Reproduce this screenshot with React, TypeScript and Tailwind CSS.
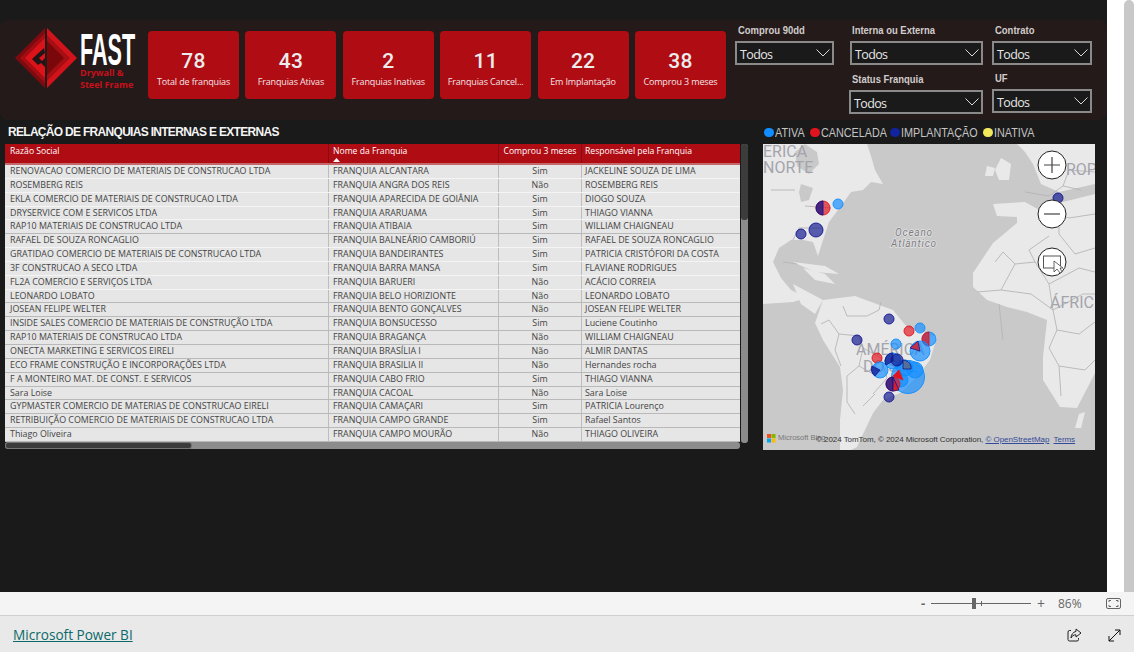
import React from "react";

const rows = [
["RENOVACAO COMERCIO DE MATERIAIS DE CONSTRUCAO LTDA","FRANQUIA ALCANTARA","Sim","JACKELINE SOUZA DE LIMA"],
["ROSEMBERG REIS","FRANQUIA ANGRA DOS REIS","Não","ROSEMBERG REIS"],
["EKLA COMERCIO DE MATERIAIS DE CONSTRUCAO LTDA","FRANQUIA APARECIDA DE GOIÂNIA","Sim","DIOGO SOUZA"],
["DRYSERVICE COM E SERVICOS LTDA","FRANQUIA ARARUAMA","Sim","THIAGO VIANNA"],
["RAP10 MATERIAIS DE CONSTRUCAO LTDA","FRANQUIA ATIBAIA","Sim","WILLIAM CHAIGNEAU"],
["RAFAEL DE SOUZA RONCAGLIO","FRANQUIA BALNEÁRIO CAMBORIÚ","Sim","RAFAEL DE SOUZA RONCAGLIO"],
["GRATIDAO COMERCIO DE MATERIAIS DE CONSTRUCAO LTDA","FRANQUIA BANDEIRANTES","Sim","PATRICIA CRISTÓFORI DA COSTA"],
["3F CONSTRUCAO A SECO LTDA","FRANQUIA BARRA MANSA","Sim","FLAVIANE RODRIGUES"],
["FL2A COMERCIO E SERVIÇOS LTDA","FRANQUIA BARUERI","Não","ACÁCIO CORREIA"],
["LEONARDO LOBATO","FRANQUIA BELO HORIZIONTE","Não","LEONARDO LOBATO"],
["JOSEAN FELIPE WELTER","FRANQUIA BENTO GONÇALVES","Não","JOSEAN FELIPE WELTER"],
["INSIDE SALES COMERCIO DE MATERIAIS DE CONSTRUÇÃO LTDA","FRANQUIA BONSUCESSO","Sim","Luciene Coutinho"],
["RAP10 MATERIAIS DE CONSTRUCAO LTDA","FRANQUIA BRAGANÇA","Não","WILLIAM CHAIGNEAU"],
["ONECTA MARKETING E SERVICOS EIRELI","FRANQUIA BRASÍLIA I","Não","ALMIR DANTAS"],
["ECO FRAME CONSTRUÇÃO E INCORPORAÇÕES LTDA","FRANQUIA BRASILIA II","Não","Hernandes rocha"],
["F A MONTEIRO MAT. DE CONST. E SERVICOS","FRANQUIA CABO FRIO","Sim","THIAGO VIANNA"],
["Sara Loise","FRANQUIA CACOAL","Não","Sara Loise"],
["GYPMASTER COMERCIO DE MATERIAS DE CONSTRUCAO EIRELI","FRANQUIA CAMAÇARI","Sim","PATRICIA Lourenço"],
["RETRIBUIÇÃO COMERCIO DE MATERIAIS DE CONSTRUCAO LTDA","FRANQUIA CAMPO GRANDE","Sim","Rafael Santos"],
["Thiago Oliveira","FRANQUIA CAMPO MOURÃO","Não","THIAGO OLIVEIRA"],
];

const cards = [
  ["78","Total de franquias"],
  ["43","Franquias Ativas"],
  ["2","Franquias Inativas"],
  ["11","Franquias Cancel..."],
  ["22","Em Implantação"],
  ["38","Comprou 3 meses"],
];

function Slicer({ label, className, labelClass }: { label: string; className: string; labelClass: string }) {
  return (
    <div className={className}>
      <div className={`h-[17px] whitespace-nowrap text-[11px] leading-[13px] font-bold text-[#d0cccc] [font-family:'Liberation_Sans',sans-serif] ${labelClass}`}>
        <span className="inline-block origin-left scale-x-[0.86]">{label}</span>
      </div>
      <div className="flex h-[24px] items-center justify-between border-2 border-[#8a8a8a] bg-[#1a1a1a] pl-[3px] pr-[1px]">
        <span className="mt-[4px] text-[12.5px] text-[#e6e6e6] tracking-[-0.6px]">Todos</span>
        <svg className="mr-[1px]" width="14" height="8" viewBox="0 0 14 8" fill="none"><path d="M0.5 0.5 L7 7 L13.5 0.5" stroke="#d8d8d8" strokeWidth="1" /></svg>
      </div>
    </div>
  );
}

function Logo() {
  return (
    <div className="flex h-full w-[148px] shrink-0 items-start pl-[15px] pt-[8px]">
      <svg width="62" height="62" viewBox="0 0 62 62" className="shrink-0">
        <polygon points="30,0 30,60 0,30" fill="#7d0a0f" />
        <polygon points="30,5 30,55 5,30" fill="#a30d13" />
        <polygon points="30,10 30,50 10,30" fill="#dc1318" />
        <polygon points="32,0 62,30 32,60" fill="#d2141a" />
        <polygon points="32,7 55,30 32,53" fill="#a50f14" />
        <polygon points="32,13 49,30 32,47" fill="#7a0709" />
        <polygon points="17,31 29,20 30,25 24,30 27,33 30,30 30,39 26,35 23,37" fill="#221517" />
      </svg>
      <div className="ml-[3px] mt-[5px] flex w-[54px] flex-col">
        <div className="h-[34px] overflow-visible whitespace-nowrap text-[44px] leading-[33px] font-bold text-white [font-family:'Liberation_Sans',sans-serif]">
          <span className="inline-block origin-left scale-x-[0.49]">FAST</span>
        </div>
        <span className="text-[9px] leading-[12px] font-bold text-[#c8101a] whitespace-nowrap">Drywall &amp;</span>
        <span className="text-[9px] leading-[12px] font-bold text-[#c8101a] whitespace-nowrap">Steel Frame</span>
      </div>
    </div>
  );
}

const BLUE = "#118dff";
const RED = "#e0141e";
const NAVY = "#12178e";

function Pie({ x, y, r, a, b }: { x: number; y: number; r: number; a: string; b: string }) {
  return (
    <g strokeWidth="0.9">
      <circle cx={x} cy={y} r={r} fill={b} fillOpacity="0.7" stroke={b} />
      <path d={`M${x} ${y - r} A${r} ${r} 0 0 0 ${x} ${y + r} Z`} fill={a} fillOpacity="0.75" stroke={a} />
    </g>
  );
}

function Dot({ x, y, r, c }: { x: number; y: number; r: number; c: string }) {
  return <circle cx={x} cy={y} r={r} fill={c} fillOpacity="0.68" stroke={c} strokeWidth="0.9" />;
}

const mapLabel = { fontFamily: "Roboto, sans-serif", fontSize: 16, fill: "#a4a4ac" };
const oceanLabel = { fontFamily: "Roboto, sans-serif", fontSize: 10, fill: "#7c7c82", fontStyle: "italic", letterSpacing: 0.8, stroke: "#e4e4e4", strokeWidth: 1.4, paintOrder: "stroke" } as React.CSSProperties;

function MapCanvas() {
  return (
    <div className="relative h-[306px] w-[332px] overflow-hidden bg-[#c9c9c9]">
      <svg viewBox="0 0 332 306" width="332" height="306" className="absolute inset-0">
        {/* North America */}
        <path fill="#e9e9e9" d="M0 0 L104 0 L108 12 L112 26 L120 40 L108 38 L100 46 L88 48 L78 62 L66 78 L60 96 L55 112 L50 98 L40 96 L28 96 L16 104 L10 118 L18 134 L28 146 L44 154 L30 158 L0 160 Z" />
        <path fill="#c9c9c9" d="M42 0 L54 8 L56 20 L46 30 L34 22 L32 8 Z" />
        <path fill="#c9c9c9" d="M38 40 L50 44 L46 56 L38 58 L36 48 Z" />
        <path fill="#e9e9e9" d="M30 118 L62 122 L76 130 L52 128 Z" />
        {/* Europe & Africa */}
        <path fill="#e9e9e9" d="M230 60 L262 58 L280 68 L300 58 L332 50 L332 229 L314 264 L297 263 L280 236 L280 213 L284 176 L264 168 L244 163 L224 156 L210 143 L210 129 L230 99 L254 79 L254 73 L234 72 Z" />
        <path fill="#e9e9e9" d="M254 0 L332 0 L332 40 L296 48 L278 40 L270 20 L262 8 Z" />
        <path fill="#e9e9e9" d="M238 14 L248 20 L246 36 L236 36 L232 26 Z" />
        <path fill="#e9e9e9" d="M224 22 L232 24 L230 32 L222 32 Z" />
        <path fill="#e9e9e9" d="M316 270 L322 268 L318 284 L312 284 Z" />
        {/* South America */}
        <path fill="#e9e9e9" d="M60 156 L92 152 L130 166 L144 183 L174 193 L167 216 L154 233 L137 249 L120 256 L110 269 L94 303 L88 306 L77 306 L77 276 L80 246 L77 223 L60 196 L52 179 Z" />
        <path fill="#e9e9e9" d="M30 140 L60 156 L52 170 L38 160 Z" />
        <path fill="#e9e9e9" d="M40 124 L62 130 L72 140 L52 136 Z" />
        <path fill="none" stroke="#b6b6b6" strokeWidth="0.9" d="M42 62 L68 64 M8 46 L32 46 M30 96 L36 84 L60 84 M20 118 L34 120 M58 180 L66 176 L76 190 L96 192 L100 204 L118 214 L124 234 L110 250 M76 190 L72 206 L78 222 M80 162 L84 172 L104 172 L116 166 M116 166 L118 158 M100 204 L96 222 L84 232 L84 258 L92 270 M96 222 L110 230 M112 250 L100 262 M236 160 L240 196 M214 148 L238 146 L268 150 L290 166 L320 150 L332 150 M238 146 L252 120 L272 118 L286 140 L290 166 M252 120 L240 108 L232 118 M286 140 L316 124 L332 128 M290 166 L294 186 L316 190 L332 178 M294 186 L286 204 L296 222 L322 226 L332 216 M296 222 L298 252 M296 60 L296 90 L312 110 L332 104 M272 118 L266 106 L286 92 M262 48 L286 52 L300 42 L318 46 M300 42 L306 26 L332 28 M280 66 L306 74 L332 70" />
        <text x="0" y="13" style={mapLabel}>ERICA</text>
        <text x="0" y="29" style={mapLabel}>NORTE</text>
        <text x="303" y="31" style={mapLabel}>ROP</text>
        <text x="287" y="164" style={mapLabel}>ÁFRIC</text>
        <text x="93" y="211" style={mapLabel}>AMÉRICA</text>
        <text x="100" y="228" style={mapLabel}>DO SUL</text>
        <text x="151" y="92" textAnchor="middle" style={oceanLabel}>Oceano</text>
        <text x="151" y="103" textAnchor="middle" style={oceanLabel}>Atlântico</text>

        {/* bubbles */}
        <Pie x={60} y={64} r={7} a={NAVY} b={RED} />
        <Dot x={75} y={60} r={5} c={BLUE} />
        <Dot x={53} y={86} r={7} c={NAVY} />
        <Dot x={38} y={90} r={5} c={NAVY} />
        <Dot x={295} y={54} r={5} c={NAVY} />
        <Dot x={126} y={175} r={5} c={NAVY} />
        <Dot x={146} y={187} r={5} c={RED} />
        <Dot x={157} y={184} r={5} c={BLUE} />
        <Pie x={166} y={195} r={7} a={RED} b={BLUE} />
        <Dot x={94} y={196} r={5} c={NAVY} />
        <Dot x={133} y={200} r={5} c={BLUE} />
        <Dot x={157} y={207} r={10} c={BLUE} />
        <path d="M157 207 L155 197 L147 204 Z" fill={RED} fillOpacity="0.8" stroke={NAVY} strokeWidth="0.8" />
        <Dot x={114} y={214} r={5} c={RED} />
        <Dot x={145} y={233} r={16.5} c={BLUE} />
        <Dot x={152} y={226} r={8} c={BLUE} />
        <Dot x={142} y={224} r={8} c={BLUE} />
        <Dot x={117} y={226} r={8} c={BLUE} />
        <path d="M117 226 L109 222 A8 8 0 0 0 112 232 Z" fill={NAVY} fillOpacity="0.75" stroke={NAVY} strokeWidth="0.8" />
        <Dot x={130} y={217} r={8} c={BLUE} />
        <path d="M130 217 L130 209 A8 8 0 0 0 123 221 Z" fill={NAVY} fillOpacity="0.75" stroke={NAVY} strokeWidth="0.8" />
        <Dot x={134} y={216} r={6} c={NAVY} />
        <Dot x={138} y={236} r={7} c={BLUE} />
        <path d="M136 226 L140 236 L130 232 Z" fill={RED} stroke={RED} strokeWidth="0.8" />
        <Pie x={130} y={240} r={7} a={NAVY} b={RED} />
        <path d="M130 233 L136 246 L130 247 Z" fill={RED} fillOpacity="0.8" stroke={NAVY} strokeWidth="0.8" />
        <path d="M140 225 L140 216 A9 9 0 0 1 148 222 L148 225 Z" fill="#5a6a8a" fillOpacity="0.85" stroke={NAVY} strokeWidth="0.8" />
        <Dot x={126} y={253} r={5} c={NAVY} />

        {/* Map controls */}
        <g fill="#fff" stroke="#222" strokeWidth="1">
          <circle cx="289" cy="21" r="14" />
          <circle cx="289" cy="70" r="14" />
          <circle cx="289" cy="118" r="14" />
        </g>
        <path d="M289 13 V29 M281 21 H297" stroke="#444" strokeWidth="1.2" />
        <path d="M281 70 H297" stroke="#444" strokeWidth="1.2" />
        <rect x="280.5" y="112" width="17" height="12" fill="none" stroke="#555" strokeWidth="1" />
        <path d="M291 117 L291 128 L294 125 L297 129 L299 128 L297 124 L300 124 Z" fill="#fff" stroke="#444" strokeWidth="0.8" />
        {/* Microsoft logo */}
        <rect x="4" y="290" width="4" height="4" fill="#f25022" />
        <rect x="8.5" y="290" width="4" height="4" fill="#7fba00" />
        <rect x="4" y="294.5" width="4" height="4" fill="#00a4ef" />
        <rect x="8.5" y="294.5" width="4" height="4" fill="#ffb900" />
      </svg>
      <span className="absolute left-[15px] top-[289px] text-[7.5px] leading-[10px] text-[#777] [font-family:'Liberation_Sans',sans-serif]">Microsoft Bing</span>
      <span className="absolute left-[53px] top-[291px] whitespace-nowrap text-[8px] leading-[10px] text-[#333] [font-family:'Liberation_Sans',sans-serif] tracking-[-0.05px]">
        © 2024 TomTom, © 2024 Microsoft Corporation, <span className="text-[#33499a] underline">© OpenStreetMap</span>&nbsp; <span className="text-[#33499a] underline">Terms</span>
      </span>
    </div>
  );
}

function LegendItem({ dot, label, w }: { dot: string; label: string; w: string }) {
  return (
    <div className={`flex items-center ${w}`}>
      <span className={`h-[9px] w-[10px] shrink-0 rounded-full ${dot}`} />
      <span className="ml-[1px] inline-block origin-left scale-x-[0.83] whitespace-nowrap">{label}</span>
    </div>
  );
}

export default function App() {
  return (
    <div className="flex h-[652px] w-[1134px] flex-col overflow-hidden bg-white [font-family:'Open_Sans',sans-serif]">
      <div className="flex h-[592px] shrink-0">
        <div className="h-full w-[1107px] bg-[#1a1a1a] pt-[20px]">
          {/* Top band */}
          <div className="flex h-[100px] rounded-[8px] bg-[#251a1a]">
            <Logo />
            <div className="mt-[11px] flex h-[68px] gap-[6.4px]">
              {cards.map(([v, l]) => (
                <div key={l} className="flex w-[91px] flex-col items-center rounded-[4px] bg-[#b00c14] pt-[18px]">
                  <span className="text-[21px] leading-[24px] font-medium tracking-[0.2px] text-[#ececec] [font-family:Roboto,sans-serif]">{v}</span>
                  <span className="mt-[3px] whitespace-nowrap text-[9px] leading-[12px] text-[#f0e4e4] tracking-[-0.15px]">{l}</span>
                </div>
              ))}
            </div>
            <div className="ml-[9px] mt-[4px] flex">
              <div className="w-[99px]">
                <Slicer label="Comprou 90dd" className="w-[99px]" labelClass="pl-[3px]" />
              </div>
              <div className="ml-[15px] flex w-[134px] flex-col gap-[8px]">
                <Slicer label="Interna ou Externa" className="ml-[1px] w-[133px]" labelClass="pl-[2px]" />
                <Slicer label="Status Franquia" className="w-[134px]" labelClass="pl-[3px]" />
              </div>
              <div className="ml-[9px] flex w-[100px] flex-col gap-[7px]">
                <Slicer label="Contrato" className="w-[100px]" labelClass="pl-[3px]" />
                <Slicer label="UF" className="w-[100px]" labelClass="pl-[3px]" />
              </div>
            </div>
          </div>
          {/* Body */}
          <div className="flex">
            <div className="ml-[5px] w-[744px] shrink-0">
              <div className="flex h-[24px] items-center pl-[3px] text-[12px] font-bold tracking-[-0.7px] text-[#f4f4f4] [font-family:'Liberation_Sans',sans-serif]">
                RELAÇÃO DE FRANQUIAS INTERNAS E EXTERNAS
              </div>
              <div className="flex">
                <div className="w-[735px] shrink-0">
                  <div className="flex h-[21px] border-b-2 border-[#c4686c] bg-[#b00c14] text-[8.6px] leading-[11px] text-white">
                    <div className="relative w-[324px] border-r border-[#8a0a10] pl-[5px] pt-[2px]">Razão Social</div>
                    <div className="relative w-[170px] border-r border-[#8a0a10] pl-[4px] pt-[2px]">
                      Nome da Franquia
                      <svg className="absolute left-[4px] top-[14px]" width="7" height="4" viewBox="0 0 7 4"><polygon points="0,4 3.5,0 7,4" fill="#fff" /></svg>
                    </div>
                    <div className="w-[83px] border-r border-[#8a0a10] pt-[2px] text-center whitespace-nowrap">Comprou 3 meses</div>
                    <div className="flex-1 pl-[3px] pt-[2px] whitespace-nowrap">Responsável pela Franquia</div>
                  </div>
                  {rows.map((r, i) => (
                    <div key={i} className={`flex h-[13.85px] items-center border-b ${i % 5 === 4 || i > 9 ? "border-[#b9b9b9]" : "border-[#f4f4f4]"} bg-[#e6e6e6] text-[8.9px] leading-[11px] text-[#444]`}>
                      <div className="h-full w-[324px] truncate border-r border-[#bdbdbd] pl-[5px]">{r[0]}</div>
                      <div className="h-full w-[170px] truncate border-r border-[#bdbdbd] pl-[4px]">{r[1]}</div>
                      <div className="h-full w-[83px] border-r border-[#bdbdbd] text-center">{r[2]}</div>
                      <div className="h-full flex-1 truncate pl-[3px]">{r[3]}</div>
                    </div>
                  ))}
                  <div className="h-[7px] rounded-[3px] bg-[#8c8c8c]">
                    <div className="h-[7px] w-[187px] rounded-[3px] border border-[#777] bg-[#3c3c3c]" />
                  </div>
                </div>
                <div className="ml-[1px] h-[299px] w-[7px] rounded-[3px] bg-[#8c8c8c]">
                  <div className="h-[76px] w-[7px] rounded-[3px] bg-[#3c3c3c]" />
                </div>
              </div>
            </div>
            <div className="ml-[14px] flex w-[332px] flex-col">
              <div className="flex h-[24px] items-center pl-[1px] pt-[1px] text-[13px] text-[#c4c4c4] [font-family:'Liberation_Sans',sans-serif]">
                <LegendItem dot="bg-[#118dff]" label="ATIVA" w="w-[46px]" />
                <LegendItem dot="bg-[#e0141e]" label="CANCELADA" w="w-[80px]" />
                <LegendItem dot="bg-[#12239e]" label="IMPLANTAÇÃO" w="w-[93px]" />
                <LegendItem dot="bg-[#f2e85c]" label="INATIVA" w="w-[50px]" />
              </div>
              <MapCanvas />
            </div>
          </div>
        </div>
        <div className="flex w-[27px] justify-end bg-white">
          <div className="h-full w-[10px] rounded-t-[5px] bg-[#c8c8c8]" />
        </div>
      </div>
      {/* zoom bar */}
      <div className="flex h-[24px] shrink-0 items-center border-b border-[#cfcfcf] bg-[#f4f4f4] text-[#666]">
        <span className="ml-[921px] w-[8px] text-[13px] font-bold leading-none">-</span>
        <div className="relative ml-[2px] h-[1px] w-[100px] bg-[#666]">
          <div className="absolute left-[41px] -top-[5px] h-[11px] w-[4px] bg-[#666]" />
          <div className="absolute left-[50px] -top-[2px] h-[5px] w-[1px] bg-[#666]" />
        </div>
        <span className="ml-[6px] w-[8px] text-[14px] leading-none">+</span>
        <span className="ml-[13px] text-[12px]">86%</span>
        <svg className="ml-[24px]" width="15" height="11" viewBox="0 0 15 11" fill="none" stroke="#666"><rect x="0.5" y="0.5" width="14" height="10" rx="1.5" /><path d="M3 4V2.5H5M10 2.5H12V4M12 7V8.5H10M5 8.5H3V7" /></svg>
      </div>
      {/* footer */}
      <div className="flex flex-1 items-center bg-[#e9e9e9] pl-[13px] pt-[2px]">
        <span className="w-[120px] whitespace-nowrap text-[13.6px] font-medium text-[#0b6a6a] underline">Microsoft Power BI</span>
        <svg className="ml-[934px]" width="15" height="14" viewBox="0 0 15 14" fill="none" stroke="#222" strokeWidth="1"><path d="M4 2.5H2.5A1.5 1.5 0 0 0 1 4V11.5A1.5 1.5 0 0 0 2.5 13H10A1.5 1.5 0 0 0 11.5 11.5V10" /><path d="M9 1L14 5L9 9V6.8C6.5 6.8 5 8 4 10C4 7 6 4 9 3.4Z" /></svg>
        <svg className="ml-[26px]" width="13" height="13" viewBox="0 0 13 13" fill="none" stroke="#111" strokeWidth="1"><path d="M1 12L12 1M7 1H12V6M1 7V12H6" /></svg>
      </div>
    </div>
  );
}
